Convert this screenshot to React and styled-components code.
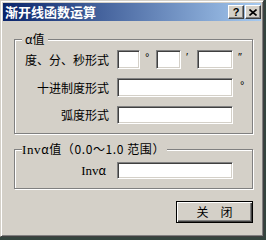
import React from "react";
import styled, { createGlobalStyle } from "styled-components";

const GlobalStyle = createGlobalStyle`
  html, body {
    margin: 0;
    padding: 0;
  }
  body {
    width: 266px;
    height: 240px;
    overflow: hidden;
    background: #34443e;
    font-family: "Noto Sans CJK SC", "Liberation Sans", sans-serif;
    font-size: 12px;
    color: #000;
  }
`;

const Window = styled.div`
  box-sizing: border-box;
  width: 264px;
  height: 237px;
  padding: 2px;
  background: #d4d0c8;
  border: 1px solid;
  border-color: #d4d0c8 #404040 #404040 #d4d0c8;
  box-shadow: inset 1px 1px #fff, inset -1px -1px #808080;
  display: flex;
  flex-direction: column;
`;

const TitleBar = styled.div`
  height: 18px;
  display: flex;
  align-items: center;
  padding: 0 0 0 2px;
  background: linear-gradient(to right, #0a246a, #a6caf0);
`;

const Title = styled.span`
  color: #fff;
  font-weight: bold;
  font-size: 13px;
  line-height: 18px;
`;

const TitleButtons = styled.div`
  margin-left: auto;
  display: flex;
  gap: 1px;
`;

const TitleButton = styled.div`
  box-sizing: border-box;
  width: 16px;
  height: 14px;
  background: #d4d0c8;
  border: 1px solid;
  border-color: #fff #404040 #404040 #fff;
  box-shadow: inset -1px -1px #808080;
  display: flex;
  align-items: center;
  justify-content: center;
  font-family: "Liberation Sans", sans-serif;
  font-weight: bold;
  font-size: 11px;
  line-height: 12px;
`;

const Body = styled.div`
  display: flex;
  flex-direction: column;
  padding: 0 8px 0 11px;
`;

const Group = styled.div`
  position: relative;
  margin-top: ${(p) => p.$top}px;
  padding: ${(p) => p.$pad};
  border: 1px solid #808080;
  box-shadow: inset 1px 1px #fff, 1px 1px #fff;
  display: flex;
  flex-direction: column;
  gap: 9px;
`;

const Caption = styled.span`
  position: absolute;
  top: -8px;
  left: 7px;
  padding: ${(p) => p.$pad};
  line-height: 14px;
  letter-spacing: ${(p) => p.$spacing || 0}px;
  background: #d4d0c8;
  white-space: nowrap;
`;

const Serif = styled.span`
  font-family: "Liberation Serif", serif;
  font-size: 13px;
`;

const Row = styled.div`
  display: grid;
  grid-template-columns: 84px auto;
  column-gap: 8px;
  align-items: center;
`;

const Label = styled.span`
  text-align: right;
  white-space: nowrap;
  padding-right: ${(p) => p.$shift || 0}px;
  line-height: 14px;
`;

const Fields = styled.div`
  display: flex;
  align-items: flex-start;
`;

const Edit = styled.div`
  box-sizing: border-box;
  width: ${(p) => p.$w}px;
  height: ${(p) => p.$h || 19}px;
  background: #fff;
  border: 1px solid;
  border-color: #808080 #fff #fff #808080;
  box-shadow: inset 1px 1px #404040, inset -1px -1px #d4d0c8;
`;

const Mark = styled.span`
  width: ${(p) => p.$w || 11}px;
  padding-left: ${(p) => p.$left || 5}px;
  font-family: "Liberation Sans", sans-serif;
  font-size: 11px;
  line-height: 12px;
  margin-top: 1px;
`;

const Footer = styled.div`
  display: flex;
  justify-content: flex-end;
  margin-top: 12px;
`;

const Button = styled.div`
  box-sizing: border-box;
  width: 77px;
  height: 22px;
  border: 1px solid #000;
  box-shadow: inset 1px 1px #fff, inset -1px -1px #404040, inset -2px -2px #808080;
  display: flex;
  align-items: center;
  justify-content: center;
  line-height: 14px;
  letter-spacing: 12px;
  text-indent: 12px;
`;

const CloseIcon = () => (
  <svg width="8" height="7" viewBox="0 0 8 7">
    <path d="M0.5 0.5 L7.5 6.5 M7.5 0.5 L0.5 6.5" stroke="#000" strokeWidth="1.6" />
  </svg>
);

const App = () => (
  <>
    <GlobalStyle />
    <Window>
      <TitleBar>
        <Title>渐开线函数运算</Title>
        <TitleButtons>
          <TitleButton>?</TitleButton>
          <TitleButton>
            <CloseIcon />
          </TitleButton>
        </TitleButtons>
      </TitleBar>
      <Body>
        <Group $top={18} $pad="10px 0 9px 10px">
          <Caption $pad="0 3px 0 3px">α值</Caption>
          <Row>
            <Label>度、分、秒形式</Label>
            <Fields>
              <Edit $w={23} />
              <Mark>°</Mark>
              <Edit $w={25} />
              <Mark>′</Mark>
              <Edit $w={36} />
              <Mark>″</Mark>
            </Fields>
          </Row>
          <Row>
            <Label>十进制度形式</Label>
            <Fields>
              <Edit $w={116} />
              <Mark $w={3} $left={7}>°</Mark>
            </Fields>
          </Row>
          <Row>
            <Label>弧度形式</Label>
            <Fields>
              <Edit $w={116} $h={18} />
            </Fields>
          </Row>
        </Group>
        <Group $top={15} $pad="12px 0 9px 10px">
          <Caption $pad="0 2px 0 0" $spacing={0.6}>
            <Serif>Inv</Serif>α值（0.0～1.0 范围）
          </Caption>
          <Row>
            <Label $shift={3}>
              <Serif>Inv</Serif>α
            </Label>
            <Fields>
              <Edit $w={116} $h={17} />
            </Fields>
          </Row>
        </Group>
        <Footer>
          <Button>关闭</Button>
        </Footer>
      </Body>
    </Window>
  </>
);

export default App;
